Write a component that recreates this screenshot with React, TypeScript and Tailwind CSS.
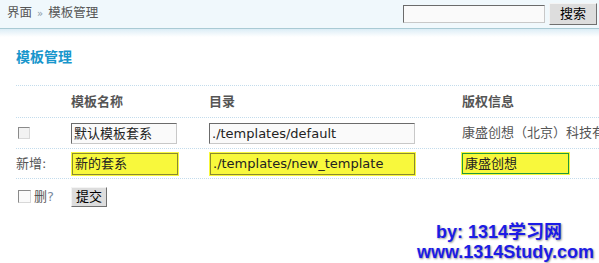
export default function App() {
  const cjk = "font-['DejaVu_Sans','Noto_Sans_CJK_SC',sans-serif]";
  const insetInput =
    "h-[21px] border border-t-[#6b6b6b] border-l-[#6b6b6b] border-r-[#c8c8c8] border-b-[#c8c8c8] bg-[#fafafa] px-[2px] text-[13px] leading-[19px] text-[#222] whitespace-nowrap overflow-hidden";
  const yellowInput =
    "h-[22px] border border-[#8a8a30] bg-[#f8f83c] px-[2px] text-[13px] leading-[20px] text-[#222] whitespace-nowrap overflow-hidden shadow-[0_0_0_1px_#f8f83c]";

  return (
    <div className={`relative w-[599px] h-[263px] overflow-hidden bg-white ${cjk}`}>
      {/* top bar */}
      <div className="h-[28px] bg-[#f0f8fc] flex items-center justify-between pl-[7px] pr-[2px]">
        <div className="text-[12.5px] text-[#555] flex items-center gap-[5px] pb-[1px]">
          <span>界面</span>
          <span className="text-[10px] text-[#8a9aa8]">»</span>
          <span>模板管理</span>
        </div>
        <div className="flex items-center gap-[4px]">
          <div className="w-[142px] h-[18px] border border-t-[#6b6b6b] border-l-[#6b6b6b] border-r-[#c8c8c8] border-b-[#c8c8c8] bg-[#fafafa]" />
          <button className="w-[48px] h-[22px] bg-[#dddddd] border border-t-[#f4f4f4] border-l-[#f4f4f4] border-r-[#707070] border-b-[#707070] text-[13px] text-black leading-[20px]">
            搜索
          </button>
        </div>
      </div>
      <div className="h-[1px] bg-[#a9cad4]" />
      <div className="h-[8px] bg-gradient-to-b from-[#dcedf6] to-white" />

      {/* heading */}
      <div className="px-4 pt-[10px]">
        <h1 className="text-[14px] font-bold text-[#1896cc] leading-[20px]">模板管理</h1>
      </div>

      {/* table */}
      <div className="ml-4 mt-[18px] text-[13px] text-[#555]">
        <div className="grid grid-cols-[55px_138px_253px_1fr] h-[32px] items-center border-t border-dotted border-[#c3dcec] font-bold">
          <div />
          <div>模板名称</div>
          <div>目录</div>
          <div className="whitespace-nowrap">版权信息</div>
        </div>
        <div className="grid grid-cols-[55px_138px_253px_1fr] h-[31px] items-center border-t border-dotted border-[#c3dcec]">
          <div className="pl-[2px]">
            <span className="block w-[12px] h-[12px] border border-t-[#8a8a8a] border-l-[#8a8a8a] border-r-[#d8d8d8] border-b-[#d8d8d8] bg-[#f2f2f2]" />
          </div>
          <div>
            <div className={`w-[106px] ${insetInput}`}>默认模板套系</div>
          </div>
          <div>
            <div className={`w-[206px] ${insetInput}`}>./templates/default</div>
          </div>
          <div className="whitespace-nowrap overflow-hidden">康盛创想（北京）科技有限</div>
        </div>
        <div className="grid grid-cols-[55px_138px_253px_1fr] h-[31px] items-center border-t border-b border-dotted border-[#c3dcec]">
          <div>新增:</div>
          <div>
            <div className={`w-[106px] ml-[1px] ${yellowInput}`}>新的套系</div>
          </div>
          <div>
            <div className={`w-[205px] ml-[1px] ${yellowInput}`}>./templates/new_template</div>
          </div>
          <div>
            <div className="w-[107px] h-[21px] border border-[#229a3c] bg-[#f8f83c] px-[2px] text-[13px] leading-[19px] text-[#222] shadow-[0_0_0_1px_#f8f83c] whitespace-nowrap">
              康盛创想
            </div>
          </div>
        </div>
        <div className="grid grid-cols-[55px_138px] h-[35px] items-center">
          <div className="flex items-center gap-[3px] pl-[2px]">
            <span className="block w-[13px] h-[13px] border border-t-[#8a8a8a] border-l-[#8a8a8a] border-r-[#d8d8d8] border-b-[#d8d8d8] bg-[#fafafa]" />
            <span>
              删<span className="text-[#7a8aa0]">?</span>
            </span>
          </div>
          <div>
            <button className="w-[36px] h-[20px] bg-[#dddddd] border border-t-[#f4f4f4] border-l-[#f4f4f4] border-r-[#707070] border-b-[#707070] text-[13px] text-black leading-[18px]">
              提交
            </button>
          </div>
        </div>
      </div>

      {/* watermark */}
      <div className="absolute right-[5px] bottom-[1px] text-right font-['Liberation_Sans','Noto_Sans_CJK_SC',sans-serif] font-bold text-[18px] leading-[20px] text-[#1c1ce6] [text-shadow:1px_1px_2px_#9a9a9a]">
        <div className="pr-[32px]">by: 1314学习网</div>
        <div>www.1314Study.com</div>
      </div>
    </div>
  );
}
